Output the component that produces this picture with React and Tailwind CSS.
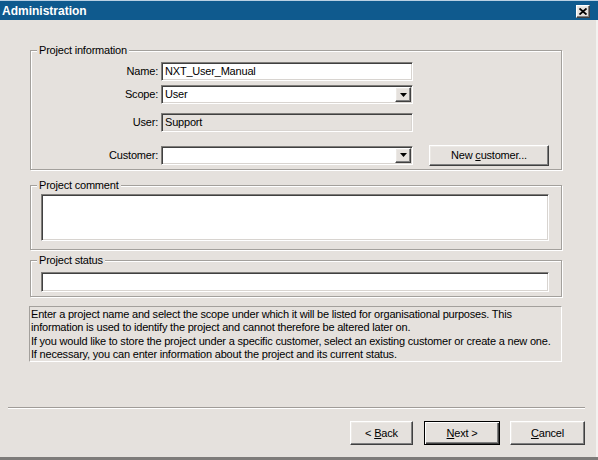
import React from "react";

const sunken =
  "border border-t-[#7f7d7a] border-l-[#7f7d7a] border-b-white border-r-white shadow-[inset_1px_1px_0_#404040,inset_-1px_-1px_0_#d8d4d0]";
const raised =
  "border border-t-white border-l-white border-b-[#404040] border-r-[#404040] shadow-[inset_-1px_-1px_0_#808080,inset_1px_1px_0_#ece9e5] bg-[#e5e1dd]";
const group =
  "relative border border-[#a3a09c] shadow-[1px_1px_0_#ffffff,inset_1px_1px_0_#ffffff]";
const legend = "absolute left-[6px] top-[-8px] bg-[#e5e1dd] px-[2px] leading-[14px]";

function DropButton() {
  return (
    <div className={"absolute right-[1px] top-[1px] bottom-[1px] w-[16px] flex items-center justify-center " + raised}>
      <svg width="7" height="4" viewBox="0 0 7 4">
        <polygon points="0,0 7,0 3.5,4" fill="#000" />
      </svg>
    </div>
  );
}

export default function App() {
  return (
    <div
      className="w-[598px] h-[460px] flex flex-col bg-[#e5e1dd] overflow-hidden text-[11px] tracking-[-0.2px] text-black"
      style={{ fontFamily: '"Liberation Sans", Arial, sans-serif' }}
    >
      {/* Title bar */}
      <div className="h-[20px] shrink-0 bg-[#0f5a8e] border-t border-[#b9d0e3] flex items-center justify-between pl-[2px] pr-[8px]">
        <span className="text-white font-bold text-[12px] tracking-normal leading-none">Administration</span>
        <div className={"w-[14px] h-[13px] flex items-center justify-center mt-[1px] " + raised}>
          <svg width="8" height="7" viewBox="0 0 8 7">
            <path d="M0.5 0.5 L7.5 6.5 M7.5 0.5 L0.5 6.5" stroke="#000" strokeWidth="1.8" />
          </svg>
        </div>
      </div>

      {/* Body */}
      <div className="flex-1 flex flex-col border-r-2 border-r-[#f4f2f0]">
        <div className="ml-[30px] w-[532px] flex flex-col">
          {/* Project information */}
          <div className={group + " mt-[30px] h-[120px] pt-[11px]"}>
            <span className={legend}>Project information</span>
            <div className="flex items-center h-[19px]">
              <span className="w-[127px] text-right">Name:</span>
              <div className={"ml-[3px] w-[252px] h-[19px] bg-white flex items-center pl-[3px] " + sunken}>
                NXT_User_Manual
              </div>
            </div>
            <div className="flex items-center h-[19px] mt-[4px]">
              <span className="w-[127px] text-right">Scope:</span>
              <div className={"relative ml-[3px] w-[252px] h-[19px] bg-white flex items-center pl-[3px] " + sunken}>
                User
                <DropButton />
              </div>
            </div>
            <div className="flex items-center h-[19px] mt-[9px]">
              <span className="w-[127px] text-right">User:</span>
              <div className={"ml-[3px] w-[252px] h-[19px] bg-[#e5e1dd] flex items-center pl-[3px] " + sunken}>
                Support
              </div>
            </div>
            <div className="flex items-center h-[20px] mt-[13px]">
              <span className="w-[127px] text-right">Customer:</span>
              <div className={"relative ml-[3px] w-[252px] h-[19px] bg-white " + sunken}>
                <DropButton />
              </div>
              <button className={"ml-[16px] w-[120px] h-[21px] flex items-center justify-center " + raised}>
                <span>
                  New <u>c</u>ustomer...
                </span>
              </button>
            </div>
          </div>

          {/* Project comment */}
          <div className={group + " mt-[15px] h-[65px] pt-[8px] pl-[10px]"}>
            <span className={legend}>Project comment</span>
            <div className={"w-[508px] h-[47px] bg-white " + sunken} />
          </div>

          {/* Project status */}
          <div className={group + " mt-[10px] h-[37px] pt-[11px] pl-[10px]"}>
            <span className={legend}>Project status</span>
            <div className={"w-[508px] h-[20px] bg-white " + sunken} />
          </div>

          {/* Description */}
          <div className="mt-[9px] h-[56px] border border-t-[#a3a09c] border-l-[#a3a09c] border-b-white border-r-white pl-[1px] pt-[1px] leading-[13.3px] -ml-[1px] whitespace-nowrap">
            <p>Enter a project name and select the scope under which it will be listed for organisational purposes. This</p>
            <p>information is used to identify the project and cannot therefore be altered later on.</p>
            <p>If you would like to store the project under a specific customer, select an existing customer or create a new one.</p>
            <p>If necessary, you can enter information about the project and its current status.</p>
          </div>
        </div>

        {/* Separator */}
        <div className="mt-[45px] ml-[8px] w-[577px] h-[2px] border-t border-t-[#a09c98] border-b border-b-white" />

        {/* Buttons */}
        <div className="flex justify-end mt-[12px] pr-[11px]">
          <button className={"w-[63px] h-[24px] flex items-center justify-center " + raised}>
            <span>
                {"< "}<u>B</u>ack
            </span>
          </button>
          <button className="ml-[11px] w-[76px] h-[24px] flex items-center justify-center border border-black bg-[#e5e1dd] shadow-[inset_1px_1px_0_#ffffff,inset_-1px_-1px_0_#404040,inset_-2px_-2px_0_#808080]">
            <span>
              <u>N</u>ext{" >"}
            </span>
          </button>
          <button className={"ml-[10px] w-[75px] h-[24px] flex items-center justify-center " + raised}>
            <span>
              <u>C</u>ancel
            </span>
          </button>
        </div>
        <div className="flex-1" />
      </div>
      <div className="h-[3px] shrink-0 bg-[#7d7b79]" />
    </div>
  );
}
